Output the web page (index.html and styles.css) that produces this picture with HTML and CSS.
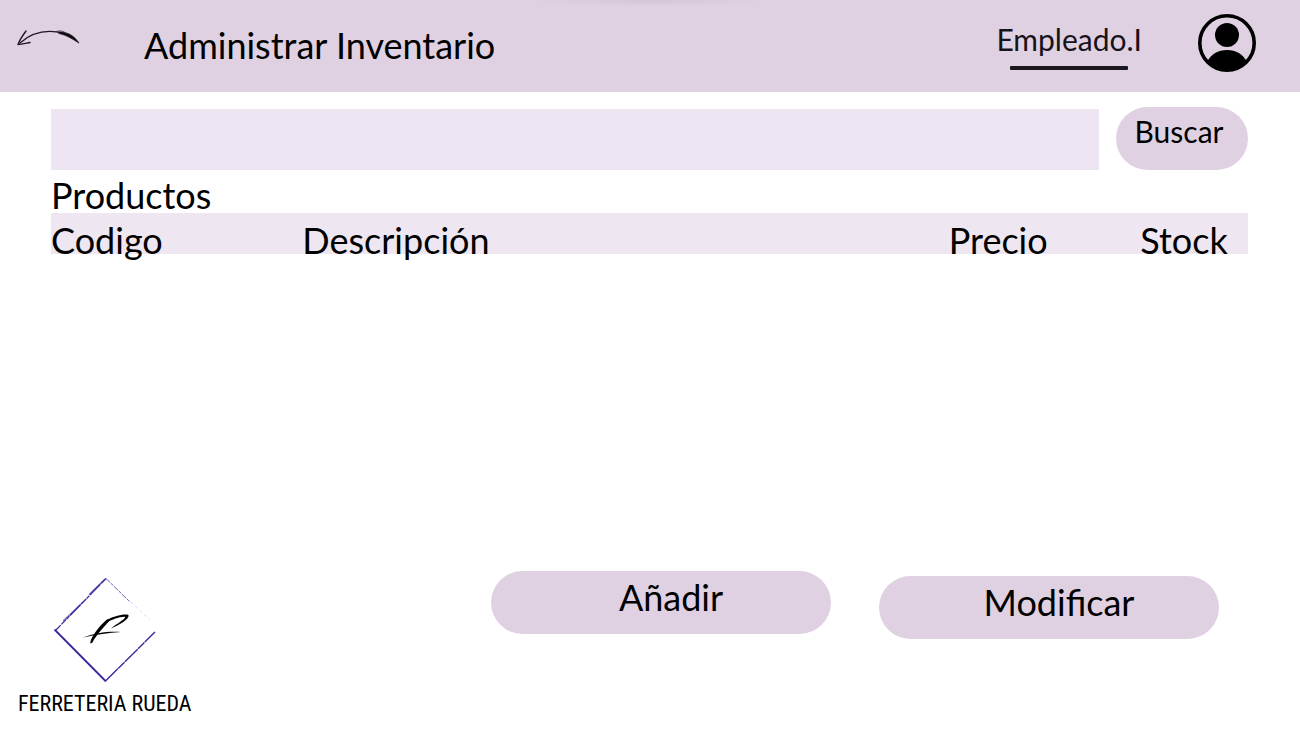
FILE: index.html
```html
<!DOCTYPE html>
<html lang="es">
<head>
<meta charset="utf-8">
<meta name="viewport" content="width=device-width, initial-scale=1">
<title>Administrar Inventario</title>
<link rel="stylesheet" href="styles.css">
</head>
<body>
<header class="topbar">
  <a class="back" href="#" aria-label="Volver">
    <svg width="64" height="18" viewBox="0 0 64 18" fill="none" stroke="#1c1720" stroke-linecap="round" stroke-linejoin="round">
      <path d="M3 13C14 3 29 -1 46 3" stroke-width="1.300"/>
      <path d="M9 1C6 5 3 9 1 14.500C5 14.500 10 13 13 12.500" stroke-width="1.400"/>
      <path d="M42 2C52 2 57 6 62 13C56 9.500 51 5.500 42 3.500Z" fill="#0b090c" stroke-width=".8"/>
      <path d="M39 1.500Q42 -.2 47 1.500" stroke-width=".6"/>
    </svg>
  </a>
  <h1 class="title">Administrar Inventario</h1>
  <a class="user" href="#">Empleado.I</a>
  <a class="avatar" href="#" aria-label="Perfil">
    <svg width="58" height="58" viewBox="0 0 58 58">
      <defs><clipPath id="face"><circle cx="29" cy="29" r="28"/></clipPath></defs>
      <circle cx="29" cy="29" r="27.200" fill="none" stroke="#000" stroke-width="3.600"/>
      <circle cx="29" cy="21" r="12"/>
      <path clip-path="url(#face)" d="M9 48C13 40 20 36 29 36S45 40 49 48L46 58H12Z"/>
    </svg>
  </a>
</header>
<main class="content">
  <form class="search" role="search">
    <input class="search-box" type="text" aria-label="Buscar productos">
    <button class="pill search-button" type="button">Buscar</button>
  </form>
  <h2 class="subtitle" id="productos">Productos</h2>
  <table class="products" aria-labelledby="productos">
    <thead>
      <tr>
        <th class="code" scope="col">Codigo</th>
        <th class="description" scope="col">Descripción</th>
        <th class="price" scope="col">Precio</th>
        <th class="stock" scope="col">Stock</th>
      </tr>
    </thead>
  </table>
</main>
<footer class="bottom">
  <div class="brand">
    <svg class="brand-mark" width="104" height="106" viewBox="0 0 104 106" fill="none" stroke="#3a2a9c">
      <path d="M53 1.500L3 53" stroke-width="1.300" stroke-dasharray="7 1 15 1 4 .5"/>
      <path d="M52 2L36 17.500M30 25L10 44" stroke-width="1.200" opacity=".65"/>
      <path d="M1.500 52.500L52.500 104" stroke-width="1.800"/>
      <path d="M2 53L26 77L52 104" stroke-width=".8"/>
      <path d="M52 104.500L102 55" stroke-width="1.400" stroke-dasharray="18 .5 9 .5"/>
      <path d="M53 1.500L77 25" stroke-width="1" stroke-dasharray="6 1 3 1" opacity=".75"/>
      <path d="M78 25L97 43" stroke-width=".7" stroke-dasharray="3 3" opacity=".25"/>
      <g fill="#000" stroke="none">
        <path d="M37.500 66.500C36.500 62 46 49 54 42.500L58 42C52 49 43 58 39.500 65.500Z"/>
        <path d="M53 43.500C60 39.500 71 36.500 75.500 38C77 42 66 48 58 51.500C64 46.500 73 42 72 39.800C66 39.500 60 42.500 54 45Z"/>
        <path d="M30 60.500C42 55.500 57 54 68 55C56 56 43 57.500 30 60.500Z"/>
      </g>
    </svg>
    <span class="brand-name">FERRETERIA RUEDA</span>
  </div>
  <div class="actions">
    <button class="pill action" type="button">Añadir</button>
    <button class="pill action edit" type="button">Modificar</button>
  </div>
</footer>
</body>
</html>
```
FILE: styles.css
```css
* {
  box-sizing: border-box;
}

body {
  display: flex;
  flex-direction: column;
  min-height: 100vh;
  margin: 0;
  background: #fff;
  color: #000;
  font-family: Lato, "Open Sans", sans-serif;
}

a {
  color: inherit;
  text-decoration: none;
}

.topbar {
  display: flex;
  align-items: flex-start;
  height: 92px;
  padding: 14px 44px 0 17px;
  background: radial-gradient(ellipse 120px 6px at 50% 0, #d3c5d6, #dfd1e1);
}

.back {
  margin-top: 16px;
}

.back svg,
.avatar svg,
.brand-mark {
  display: block;
}

.title {
  flex: 1;
  margin: 7px 0 0 63px;
  font-size: 36px;
  font-weight: 400;
  line-height: 48px;
}

.user {
  display: flex;
  flex-direction: column;
  align-items: center;
  margin: 7px 56px 0 0;
  color: #17121a;
  font-size: 30px;
  line-height: 36px;
}

.user::after {
  width: 118px;
  height: 4px;
  margin-top: 9px;
  border-radius: 1px;
  background: #1b171f;
  content: "";
}

.content {
  flex: 1;
  padding: 15px 52px 0 51px;
}

.search {
  display: flex;
  align-items: flex-end;
  gap: 17px;
}

.search-box {
  flex: 1;
  min-width: 0;
  height: 61px;
  padding: 0 16px;
  border: 0;
  background: #eee5f2;
  font: inherit;
  font-size: 30px;
}

.pill {
  display: block;
  height: 63px;
  border: 0;
  border-radius: 32px;
  background: #dfd1e1;
  color: inherit;
  font: inherit;
}

.search-button {
  width: 132px;
  padding: 0 6px 16px 0;
  font-size: 30px;
  line-height: 36px;
}

.subtitle {
  margin: 7px 0 0;
  font-size: 36px;
  font-weight: 400;
  line-height: 36px;
}

.products {
  width: 100%;
  border-collapse: collapse;
  table-layout: fixed;
  background: #eee6f0;
}

.products th {
  height: 41px;
  padding: 13px 0 0;
  font-size: 36px;
  font-weight: 400;
  line-height: 28px;
  text-align: left;
}

.code {
  width: 21%;
}

.description {
  width: 54%;
}

.price {
  width: 16%;
}

.bottom {
  display: flex;
  justify-content: space-between;
  padding: 0 81px 12px 18px;
}

.brand {
  display: flex;
  flex-direction: column;
  align-items: center;
  padding-top: 6px;
}

.brand-name {
  margin-top: 6px;
  font-family: "Roboto Condensed", "Liberation Sans Narrow", Roboto, sans-serif;
  font-size: 22px;
  line-height: 30px;
}

.actions {
  display: flex;
  gap: 48px;
}

.action {
  width: 340px;
  padding: 0 0 12px 20px;
  font-size: 36px;
  line-height: 48px;
}

.edit {
  margin-top: 5px;
}
```
